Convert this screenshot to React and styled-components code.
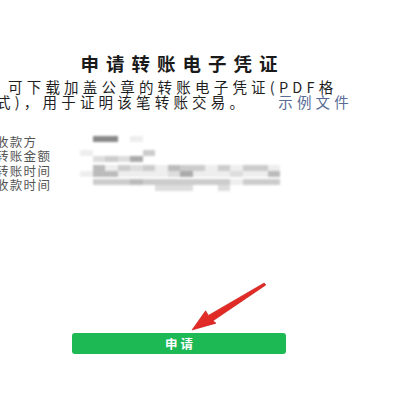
import React from 'react';
import styled, { createGlobalStyle } from 'styled-components';

const GlobalStyle = createGlobalStyle`
  html, body {
    margin: 0;
    padding: 0;
    background: #fff;
  }
  body {
    font-family: "Noto Sans CJK SC", "Noto Sans", sans-serif;
  }
`;

const rows = [
  {
    label: '收款方',
    top: '0770100000000000',
    bottom: '0000000000000000',
  },
  {
    label: '转账金额',
    top: '1000030000000000',
    bottom: '0232500000000000',
  },
  {
    label: '转账时间',
    top: '0413231433131331',
    bottom: '1441111251112114',
  },
  {
    label: '收款时间',
    top: '0333433333331333',
    bottom: '0000002220020000',
  },
];

const shadeColor = (n) => {
  const v = 255 - n * 17;
  return `rgb(${v}, ${v}, ${v})`;
};

const App = () => {
  return (
    <Page>
      <GlobalStyle />
      <Content>
        <Title>申请转账电子凭证</Title>
        <Intro>
          <IntroLine $indent>可下载加盖公章的转账电子凭证(PDF格</IntroLine>
          <IntroLine>
            式)，用于证明该笔转账交易。<SampleLink>示例文件</SampleLink>
          </IntroLine>
        </Intro>
        <InfoList>
          {rows.map((row) => (
            <InfoRow key={row.label}>
              <Label>{row.label}</Label>
              <Mosaic>
                {[row.top, row.bottom].map((line, i) => (
                  <MosaicLine key={i}>
                    {line.split('').map((c, j) => (
                      <Cell key={j} $shade={shadeColor(Number(c))} />
                    ))}
                  </MosaicLine>
                ))}
              </Mosaic>
            </InfoRow>
          ))}
        </InfoList>
        <ApplyButton>申请</ApplyButton>
      </Content>
      <Arrow viewBox="0 0 400 401" width="400" height="401">
        <defs>
          <linearGradient id="arrowFill" x1="0" y1="0" x2="1" y2="1">
            <stop offset="0" stopColor="#f23a33" />
            <stop offset="1" stopColor="#d11a18" />
          </linearGradient>
        </defs>
        <polygon
          points="265.8,285 264.2,283 208.4,315.4 205.6,310.8 192,330 216,323.2 213,320.8"
          fill="url(#arrowFill)"
          stroke="#c41614"
          strokeWidth="0.6"
          strokeLinejoin="round"
        />
      </Arrow>
    </Page>
  );
};

const Page = styled.div`
  position: relative;
  width: 400px;
  height: 401px;
  overflow: hidden;
  background: #fff;
`;

const Content = styled.div`
  display: flex;
  flex-direction: column;
  width: 398px;
  margin-left: -20px;
  padding: 51px 16px 0;
  box-sizing: border-box;
`;

const Title = styled.h1`
  margin: 0;
  text-align: center;
  font-size: 18.5px;
  line-height: 24px;
  font-weight: 700;
  letter-spacing: 7px;
  text-indent: 7px;
  color: #1a1a1a;
`;

const Intro = styled.div`
  margin-top: 4px;
  display: flex;
  flex-direction: column;
`;

const IntroLine = styled.div`
  white-space: nowrap;
  font-size: 14.5px;
  line-height: 15px;
  letter-spacing: 4.2px;
  color: #1f1f1f;
  padding-left: ${(p) => (p.$indent ? '12px' : '0')};
`;

const SampleLink = styled.span`
  margin-left: 30px;
  color: #576b95;
`;

const InfoList = styled.div`
  margin-top: 26px;
  display: flex;
  flex-direction: column;
`;

const InfoRow = styled.div`
  display: flex;
  align-items: center;
  height: 14.3px;
`;

const Label = styled.span`
  width: 84px;
  flex-shrink: 0;
  font-size: 12.5px;
  line-height: 14px;
  letter-spacing: 1.3px;
  color: #555;
  white-space: nowrap;
`;

const Mosaic = styled.div`
  display: flex;
  flex-direction: column;
  filter: blur(1.1px);
`;

const MosaicLine = styled.div`
  display: flex;
`;

const Cell = styled.div`
  width: 12.5px;
  height: 6px;
  background: ${(p) => p.$shade};
`;

const ApplyButton = styled.button`
  align-self: center;
  margin-top: 141px;
  width: 214px;
  height: 21px;
  border: none;
  border-radius: 3px;
  background: #1db954;
  color: #fff;
  font-family: "Noto Sans CJK SC", sans-serif;
  font-size: 12.5px;
  font-weight: 700;
  letter-spacing: 3px;
  text-indent: 3px;
  padding: 0;
`;

const Arrow = styled.svg`
  position: absolute;
  left: 0;
  top: 0;
  pointer-events: none;
`;

export default App;
